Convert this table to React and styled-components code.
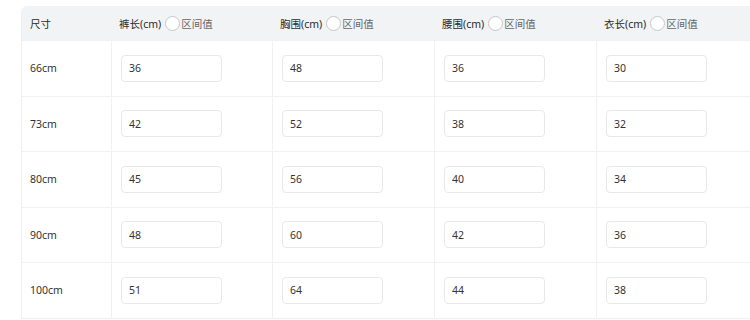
import React from 'react';
import styled, { createGlobalStyle } from 'styled-components';

const GlobalStyle = createGlobalStyle`
  html, body {
    margin: 0;
    padding: 0;
    background: #ffffff;
    overflow: hidden;
  }
  body {
    font-family: 'Noto Sans', 'Noto Sans CJK SC', sans-serif;
    color: #333333;
  }
`;

const Page = styled.div`
  padding: 6px 0 0 21px;
  width: 760px;
`;

const Table = styled.div`
  display: grid;
  grid-template-columns: 89px 161px 162px 162px 161px;
  grid-template-rows: 34px repeat(5, 55.5px);
  width: 736px;
  border-left: 1px solid #eef0f3;
  border-bottom: 1px solid #eef0f3;
  border-top-left-radius: 6px;
  box-sizing: border-box;
  overflow: hidden;
`;

const HeadCell = styled.div`
  display: flex;
  align-items: center;
  gap: 4px;
  padding: 0 8px;
  background: #f2f3f5;
  font-size: 10.5px;
  color: #2b2b2b;
  white-space: nowrap;
`;

const Cell = styled.div`
  display: flex;
  align-items: center;
  padding: 0 ${(p) => (p.$first ? 8 : 9)}px;
  border-top: 1px solid #f0f1f3;
  border-left: ${(p) => (p.$first ? 'none' : '1px solid #f0f1f3')};
  font-size: 10.5px;
  color: #333333;
`;

const Range = styled.label`
  display: flex;
  align-items: center;
  gap: 1px;
  color: #666666;
`;

const Circle = styled.span`
  width: 15px;
  height: 15px;
  box-sizing: border-box;
  border: 1px solid #c4c7cc;
  border-radius: 50%;
  background: #ffffff;
`;

const Input = styled.div`
  width: 101px;
  height: 27px;
  box-sizing: border-box;
  border: 1px solid #e7e8eb;
  border-radius: 4px;
  padding: 0 7px;
  display: flex;
  align-items: center;
  font-size: 10.5px;
  color: #333333;
  background: #ffffff;
`;

const columns = ['裤长(cm)', '胸围(cm)', '腰围(cm)', '衣长(cm)'];

const rows = [
  { size: '66cm', values: [36, 48, 36, 30] },
  { size: '73cm', values: [42, 52, 38, 32] },
  { size: '80cm', values: [45, 56, 40, 34] },
  { size: '90cm', values: [48, 60, 42, 36] },
  { size: '100cm', values: [51, 64, 44, 38] },
];

const App = () => (
  <>
    <GlobalStyle />
    <Page>
      <Table>
        <HeadCell>尺寸</HeadCell>
        {columns.map((c) => (
          <HeadCell key={c}>
            {c}
            <Range>
              <Circle />
              区间值
            </Range>
          </HeadCell>
        ))}
        {rows.map((r) => (
          <React.Fragment key={r.size}>
            <Cell $first>{r.size}</Cell>
            {r.values.map((v, i) => (
              <Cell key={i}>
                <Input>{v}</Input>
              </Cell>
            ))}
          </React.Fragment>
        ))}
      </Table>
    </Page>
  </>
);

export default App;
